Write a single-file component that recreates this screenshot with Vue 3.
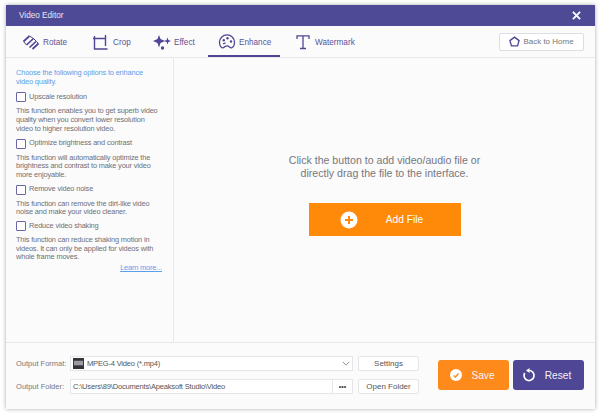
<script setup>
const tabs = [
  { name: 'Rotate', icon: 'rotate' },
  { name: 'Crop', icon: 'crop' },
  { name: 'Effect', icon: 'effect' },
  { name: 'Enhance', icon: 'enhance', active: true },
  { name: 'Watermark', icon: 'text' }
]
const options = [
  { label: 'Upscale resolution', text: 'This function enables you to get superb video quality when you convert lower resolution video to higher resolution video.' },
  { label: 'Optimize brightness and contrast', text: 'This function will automatically optimize the brightness and contrast to make your video more enjoyable.' },
  { label: 'Remove video noise', text: 'This function can remove the dirt-like video noise and make your video cleaner.' },
  { label: 'Reduce video shaking', text: 'This function can reduce shaking motion in videos. It can only be applied for videos with whole frame moves.' }
]
</script>

<template>
  <div class="page">
    <div class="window">
      <header class="titlebar">
        <span>Video Editor</span>
        <svg class="close" width="9" height="9" viewBox="0 0 10 10"><path d="M1 1l8 8M9 1l-8 8" stroke="#fff" stroke-width="2"/></svg>
      </header>
      <nav class="tabs">
        <div v-for="t in tabs" :key="t.name" class="tab" :class="[t.icon, { active: t.active }]">
          <svg width="18" height="18" viewBox="0 0 18 18" fill="none" stroke="#4f4795" stroke-width="1.300">
            <template v-if="t.icon === 'rotate'">
              <path d="M1.500 8.500L7.500 3M4.500 12L11.500 5.500M7.500 14.500L14 8.500M10.500 16L16.500 10.500" stroke-width="1.700"/>
              <path d="M1.500 8.500l3 3.500M7.500 3l4 2.500 3 3 2 2" stroke-width="1"/>
            </template>
            <template v-else-if="t.icon === 'crop'">
              <path d="M2.500 3v13h13M1 5.500h13M13.500 2v11" stroke-width="1.400"/>
            </template>
            <template v-else-if="t.icon === 'effect'">
              <path d="M6 2l1.500 4L12 8 7.500 10 6 14.500 4.500 10 0 8l4.500-2z" fill="#4f4795" stroke="none"/>
              <path d="M14.500 4.500l.9 2.600 2.600.9-2.600.9-.9 2.600-.9-2.600L11 8l2.600-.9z" fill="#4f4795" stroke="none"/>
              <circle cx="9.500" cy="15" r="1.700" fill="#4f4795" stroke="none"/>
            </template>
            <template v-else-if="t.icon === 'enhance'">
              <path d="M9 1.800a7.500 7.500 0 0 1 7.500 7.300c0 3-1.400 5.200-2.900 5.700-1.700.5-2.300-2-4.600-2s-2.900 2.500-4.600 2C2.900 14.300 1.500 12.100 1.500 9.100A7.500 7.500 0 0 1 9 1.800z"/>
              <circle cx="5.800" cy="7.200" r="1.200" fill="#4f4795" stroke="none"/>
              <circle cx="9.500" cy="5.300" r="1.200" fill="#4f4795" stroke="none"/>
              <circle cx="13" cy="8.500" r="1.200" fill="#4f4795" stroke="none"/>
              <path d="M5 11l2.500-1.200"/>
            </template>
            <template v-else>
              <path d="M3 6V2.800h12V6M9 2.800v12.700M6 15.500h6"/>
            </template>
          </svg>
          <span>{{ t.name }}</span>
        </div>
        <button class="home">
          <svg width="11" height="11" viewBox="0 0 12 12" fill="none" stroke="#4f4795" stroke-width="1.500"><path d="M6 1.200L11 5 9.300 10.800H2.700L1 5z"/></svg>
          Back to Home
        </button>
      </nav>
      <main class="body">
        <aside class="side">
          <p class="intro">Choose the following options to enhance video quality.</p>
          <div v-for="o in options" :key="o.label" class="option">
            <label class="check"><i></i>{{ o.label }}</label>
            <p>{{ o.text }}</p>
          </div>
          <a class="more">Learn more...</a>
        </aside>
        <section class="drop">
          <p>Click the button to add video/audio file or<br>directly drag the file to the interface.</p>
          <button class="add">
            <svg width="18" height="18" viewBox="0 0 18 18"><circle cx="9" cy="9" r="8.500" fill="#fff"/><path d="M9 5v8M5 9h8" stroke="#ff8a0a" stroke-width="2"/></svg>
            <span>Add File</span>
          </button>
        </section>
      </main>
      <footer class="foot">
        <div class="fields">
          <div class="row">
            <label>Output Format:</label>
            <div class="input select">
              <svg width="11" height="11" viewBox="0 0 12 12"><rect width="12" height="12" fill="#33333a"/><rect x="1" y="3" width="10" height="5" fill="#9a9aa0"/></svg>
              <span>MPEG-4 Video (*.mp4)</span>
              <svg class="chev" width="8" height="5" viewBox="0 0 10 6" fill="none" stroke="#8a8a8e" stroke-width="1.200"><path d="M1 1l4 4 4-4"/></svg>
            </div>
            <button class="small">Settings</button>
          </div>
          <div class="row">
            <label>Output Folder:</label>
            <div class="input path">
              <span>C:\Users\89\Documents\Apeaksoft Studio\Video</span>
              <b>•••</b>
            </div>
            <button class="small">Open Folder</button>
          </div>
        </div>
        <button class="big save">
          <svg width="16" height="16" viewBox="0 0 16 16"><circle cx="8" cy="8" r="6" fill="#fff"/><path d="M5.500 8.500l2 1.500 3-3.500" stroke="#ff8a1c" stroke-width="1.500" fill="none"/></svg>
          <span>Save</span>
        </button>
        <button class="big reset">
          <svg width="16" height="16" viewBox="0 0 16 16" fill="none" stroke="#fff" stroke-width="1.700"><path d="M8 3.500a5 5 0 1 1-4.300 2.500"/><path d="M8.500 1v5L5 3.500z" fill="#fff" stroke="none"/></svg>
          <span>Reset</span>
        </button>
      </footer>
    </div>
  </div>
</template>

<style>
html, body { margin: 0; background: #fff; }
</style>

<style scoped>
.page { width: 600px; height: 415px; padding: 5px 5px 6px 6px; box-sizing: border-box; font-family: "Liberation Sans", Arial, sans-serif; overflow: hidden; }
.window { height: 404px; background: #fbfbfc; box-shadow: 0 0 4px rgba(0,0,0,.35); display: flex; flex-direction: column; }
.titlebar { height: 21px; flex: none; background: #4f4a96; color: #e8e7f2; font-size: 8.200px; line-height: 21px; padding-left: 13px; display: flex; justify-content: space-between; align-items: center; }
.close { margin-right: 14px; }
.tabs { height: 31px; flex: none; display: flex; align-items: center; border-bottom: 1px solid #e8e8ea; position: relative; padding-left: 16px; }
.tab { height: 30px; display: flex; align-items: center; gap: 3px; color: #5a5496; font-size: 8.200px; box-sizing: border-box; padding-top: 1px; }
.tab.rotate { width: 70px; }
.tab.crop { width: 61px; }
.tab.effect { width: 55px; }
.tab.enhance { width: 72px; padding-left: 10px; margin-right: 14px; }
.tab.active { box-shadow: inset 0 -2px 0 #4f4795; }
.home { margin-left: auto; margin-right: 11px; width: 85px; height: 18px; background: #fff; border: 1px solid #dddde2; border-radius: 2px; color: #777; font: 8px "Liberation Sans", Arial, sans-serif; display: flex; align-items: center; justify-content: center; gap: 3px; padding: 0; }
.body { flex: 1; display: flex; min-height: 0; border-bottom: 1px solid #e8e8ea; }
.side { width: 168px; flex: none; box-sizing: border-box; border-right: 1px solid #e8e8ea; padding: 11px 13px 0 10px; font-size: 7.400px; letter-spacing: -.16px; line-height: 8.700px; color: #6f6f75; display: flex; flex-direction: column; }
.side p { margin: 0; }
.intro { color: #5aa0e8; margin-bottom: 6px !important; }
.check { display: flex; align-items: center; gap: 3px; height: 10px; margin-bottom: 5px; }
.check i { width: 8px; height: 8px; border: 1px solid #6c66a8; border-radius: 1px; background: #fff; }
.option { margin-bottom: 5px; }
.option:nth-of-type(3) { margin-bottom: 4px; }
.more { align-self: flex-end; color: #5aa0e8; text-decoration: underline; margin-top: -3px; margin-right: -2px; }
.drop { flex: 1; display: flex; flex-direction: column; align-items: center; padding-top: 96px; }
.drop p { margin: 0; text-align: center; color: #77777d; font-size: 10.600px; line-height: 13px; }
.add { margin-top: 23px; width: 152px; height: 33px; border: 0; background: #ff8a0a; color: #fff; font: 10.200px "Liberation Sans", Arial, sans-serif; position: relative; padding: 0 0 0 40px; }
.add svg { position: absolute; left: 31px; top: 8px; }
.foot { height: 66px; flex: none; display: flex; align-items: flex-start; padding: 0 0 0 10px; box-sizing: border-box; }
.fields { width: 403px; padding-top: 13px; margin-right: 19px; display: flex; flex-direction: column; gap: 8px; }
.row { height: 15px; display: flex; align-items: center; font-size: 7.500px; color: #77777d; }
.row label { width: 48px; text-align: right; flex: none; margin-right: 6px; white-space: nowrap; }
.input { width: 281px; height: 13px; background: #fff; border: 1px solid #e6e6ea; display: flex; align-items: center; box-sizing: content-box; color: #555; flex: none; letter-spacing: -.17px; }
.select svg:first-child { margin: 0 3px 0 2px; }
.chev { margin-left: auto; margin-right: 2px; }
.path span { padding-left: 2px; }
.path b { margin-left: auto; width: 19px; height: 13px; border-left: 1px solid #e6e6ea; text-align: center; line-height: 13px; font-size: 7px; letter-spacing: 0; color: #444; }
.small { margin-left: 5px; width: 60px; height: 13px; background: #fff; border: 1px solid #e6e6ea; border-radius: 2px; color: #555; font: 8px "Liberation Sans", Arial, sans-serif; padding: 0; box-sizing: content-box; }
.big { width: 71px; height: 30px; border: 0; border-radius: 3px; margin-top: 17px; color: #f3f1f7; font: 10.200px "Liberation Sans", Arial, sans-serif; position: relative; padding: 0 0 0 19px; }
.big svg { position: absolute; left: 10px; top: 7px; }
.reset svg { left: 8px; }
.save { background: #ff8a1c; margin-right: 4px; }
.reset { background: #4f4795; }
</style>
